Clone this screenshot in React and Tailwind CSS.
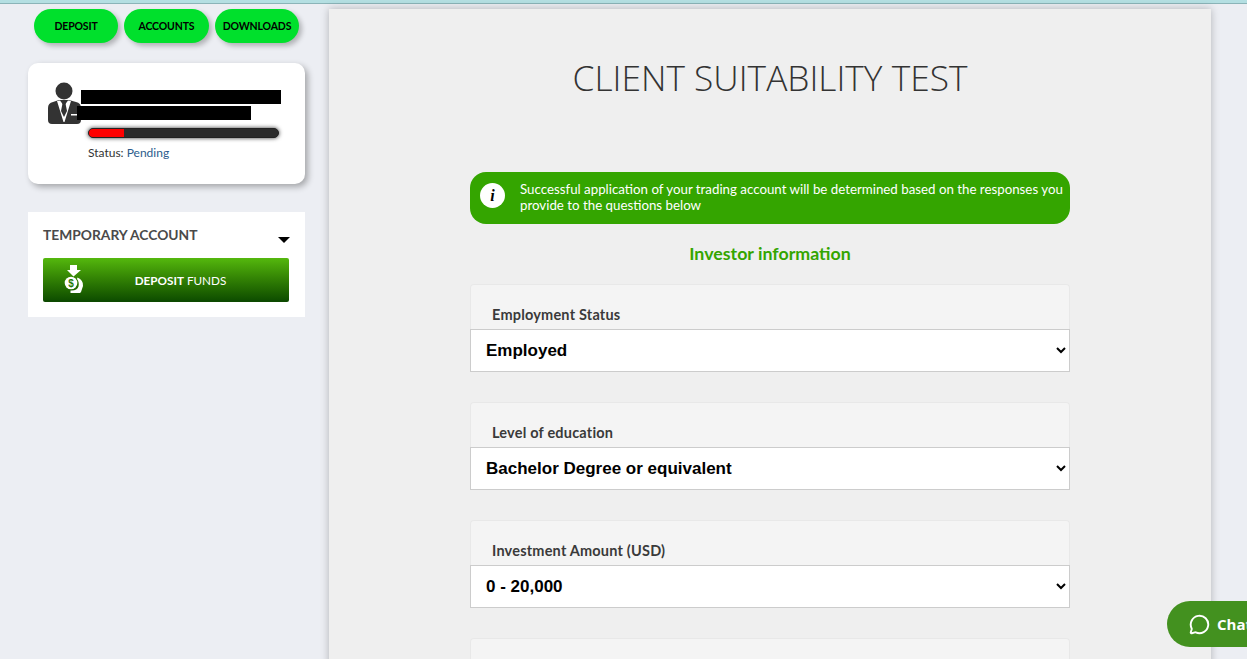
import React from "react";
import {MessageCircle} from "lucide-react";

const FONT = "font-['Lato','Open_Sans',sans-serif]";

const PersonIcon = () => (
    <svg viewBox="0 0 33 42" className="w-[33px] h-[42px] shrink-0">
        <circle cx="16" cy="9" r="8.5" className="fill-[#333]"/>
        <path d="M5 20 L11 18 H21 L28 20 Q33 21 33 26 V38 Q33 42 29 42 H4 Q0 42 0 38 V26 Q0 21 5 20 Z" className="fill-[#333]"/>
        <path d="M9 19 L12 18.500 L16 24 L20 18.500 L23 19 L16.500 40 H15.500 Z" className="fill-white"/>
        <path d="M13.500 18.500 H18.500 L17.500 21.500 L19 29 L16 35 L13 29 L14.500 21.500 Z" className="fill-[#333]"/>
        <rect x="23" y="32" width="10" height="1.500" className="fill-white"/>
    </svg>
);

const DepositIcon = () => (
    <svg viewBox="0 0 20 30" className="w-[20px] h-[30px] fill-white">
        <path d="M6 1 H13 V6 H17 L9.500 12.500 L3 6 H6 Z"/>
        <circle cx="7" cy="19" r="6.300"/>
        <path d="M13.500 13.500 Q19.500 16 19 22 L17 28 L16 29 H6.500 V26.500 Q13 27 14.500 22.500 Q15.500 18 13 15 Z"/>
        <text x="7" y="22.500" textAnchor="middle" fontSize="10" fontWeight="700" fontFamily="Liberation Sans" className="fill-[#1f7a05]">$</text>
    </svg>
);

const NavButton = ({label, w}) => (
    <button className={`h-[34px] pt-px rounded-full bg-[#00e02c] text-black text-[10.500px] tracking-[-0.15px] font-bold leading-none shadow-[3px_3px_5px_rgba(0,0,0,0.25)] ${w}`}>
        {label}
    </button>
);

const Field = ({label, value}) => (
    <div className="mb-[30px]">
        <div className="h-[45px] bg-[#f4f4f4] border border-b-0 border-[#e8e8e8] rounded-t-[4px] pl-[21px] pt-[21px] text-[14.500px] tracking-[0.2px] leading-[18px] font-bold text-[#3a3a3a]">
            {label}
        </div>
        <select
            defaultValue={value}
            className="block w-full h-[43px] bg-white border border-[#ccc] pl-[11px] pr-[3px] text-[17px] font-bold text-black font-['Liberation_Sans',sans-serif]">
            <option>{value}</option>
        </select>
    </div>
);

const App = () => {
    return (
        <div className={`relative h-[659px] overflow-hidden bg-[#eceef3] ${FONT}`}>
            <div className="h-[4px] bg-[#b4dfe2] border-b border-[#8bb4b8]"/>

            <div className="flex items-start pl-[28px]">
                {/* left column */}
                <div className="w-[277px] shrink-0">
                    <div className="flex gap-[6px] pl-[6px] pt-[5px]">
                        <NavButton label="DEPOSIT" w="w-[84px]"/>
                        <NavButton label="ACCOUNTS" w="w-[85px]"/>
                        <NavButton label="DOWNLOADS" w="w-[84px]"/>
                    </div>

                    <div className="mt-[20px] h-[121px] bg-white rounded-[10px] shadow-[3px_3px_6px_rgba(0,0,0,0.3)] pl-[20px] pt-[19px]">
                        <div className="flex">
                            <PersonIcon/>
                            <div className="pt-[8px]">
                                <div className="w-[200px] h-[14px] bg-black"/>
                                <div className="w-[174px] h-[14px] bg-black mt-[2px] -ml-[4px]"/>
                            </div>
                        </div>
                        <div className="ml-[40px] mt-[4px] w-[191px] h-[10px] rounded-full bg-[#2b2b2b] border border-[#222] shadow-[0_0_4px_rgba(0,0,0,0.8)] overflow-hidden">
                            <div className="w-[35px] h-full bg-[#f00]"/>
                        </div>
                        <div className="ml-[40px] mt-[7px] text-[12px] leading-[16px] text-[#333]">
                            Status: <span className="text-[#2c5c8c]">Pending</span>
                        </div>
                    </div>

                    <div className="mt-[28px] h-[105px] bg-white px-[15px] pt-[14px]">
                        <div className="flex justify-between items-start h-[32px]">
                            <span className="text-[13.800px] leading-[18px] font-bold text-[#4a4a4a]">TEMPORARY ACCOUNT</span>
                            <span className="mt-[11px] w-0 h-0 border-x-[6px] border-x-transparent border-t-[6px] border-t-black"/>
                        </div>
                        <button className="flex items-center w-[246px] h-[44px] rounded-[2px] border-b-2 border-[#0d4a00] bg-gradient-to-b from-[#55b80e] to-[#0f4f00] text-[11.700px] text-white">
                            <span className="ml-[21px] w-[20px]"><DepositIcon/></span>
                            <span className="flex-1 pr-[12px] pt-[3px]"><b>DEPOSIT</b> FUNDS</span>
                        </button>
                    </div>
                </div>

                {/* main panel */}
                <div className="ml-[24px] mt-[5px] w-[882px] h-[700px] bg-[#efefef] shadow-[0_0_8px_rgba(0,0,0,0.25)] flex flex-col items-center">
                    <h1 className="mt-[46px] h-[44px] text-[35.300px] leading-[44px] font-light text-[#333] font-['Open_Sans',sans-serif]">
                        CLIENT SUITABILITY TEST
                    </h1>
                    <div className="mt-[73px] w-[600px]">
                        <div className="flex items-start h-[52px] rounded-[16px] bg-[#34a500] pl-[10px] pr-[2px] text-white text-[13.300px] leading-[16px]">
                            <span className="mt-[11px] w-[25px] h-[25px] shrink-0 rounded-full bg-white flex items-center justify-center text-black text-[16px] italic font-bold font-['Liberation_Serif',serif]">i</span>
                            <p className="ml-[15px] mt-[9px]">Successful application of your trading account will be determined based on the responses you provide to the questions below</p>
                        </div>
                        <h2 className="mt-[18px] mb-[20px] text-center text-[17.800px] leading-[22px] font-bold text-[#34a500]">Investor information</h2>
                        <Field label="Employment Status" value="Employed"/>
                        <Field label="Level of education" value="Bachelor Degree or equivalent"/>
                        <Field label="Investment Amount (USD)" value="0 - 20,000"/>
                        <div className="h-[45px] bg-[#f4f4f4] border border-b-0 border-[#e8e8e8] rounded-t-[4px]"/>
                    </div>
                </div>
            </div>

            {/* chat widget */}
            <div className="absolute left-[1167px] top-[601px] w-[100px] h-[46px] rounded-l-[23px] bg-[#43911f] flex items-center pl-[22px] text-white">
                <MessageCircle size={21} strokeWidth={2.2}/>
                <span className="ml-[7px] text-[15px] font-bold font-['Open_Sans',sans-serif]">Chat</span>
            </div>
        </div>
    );
}

export default App;
